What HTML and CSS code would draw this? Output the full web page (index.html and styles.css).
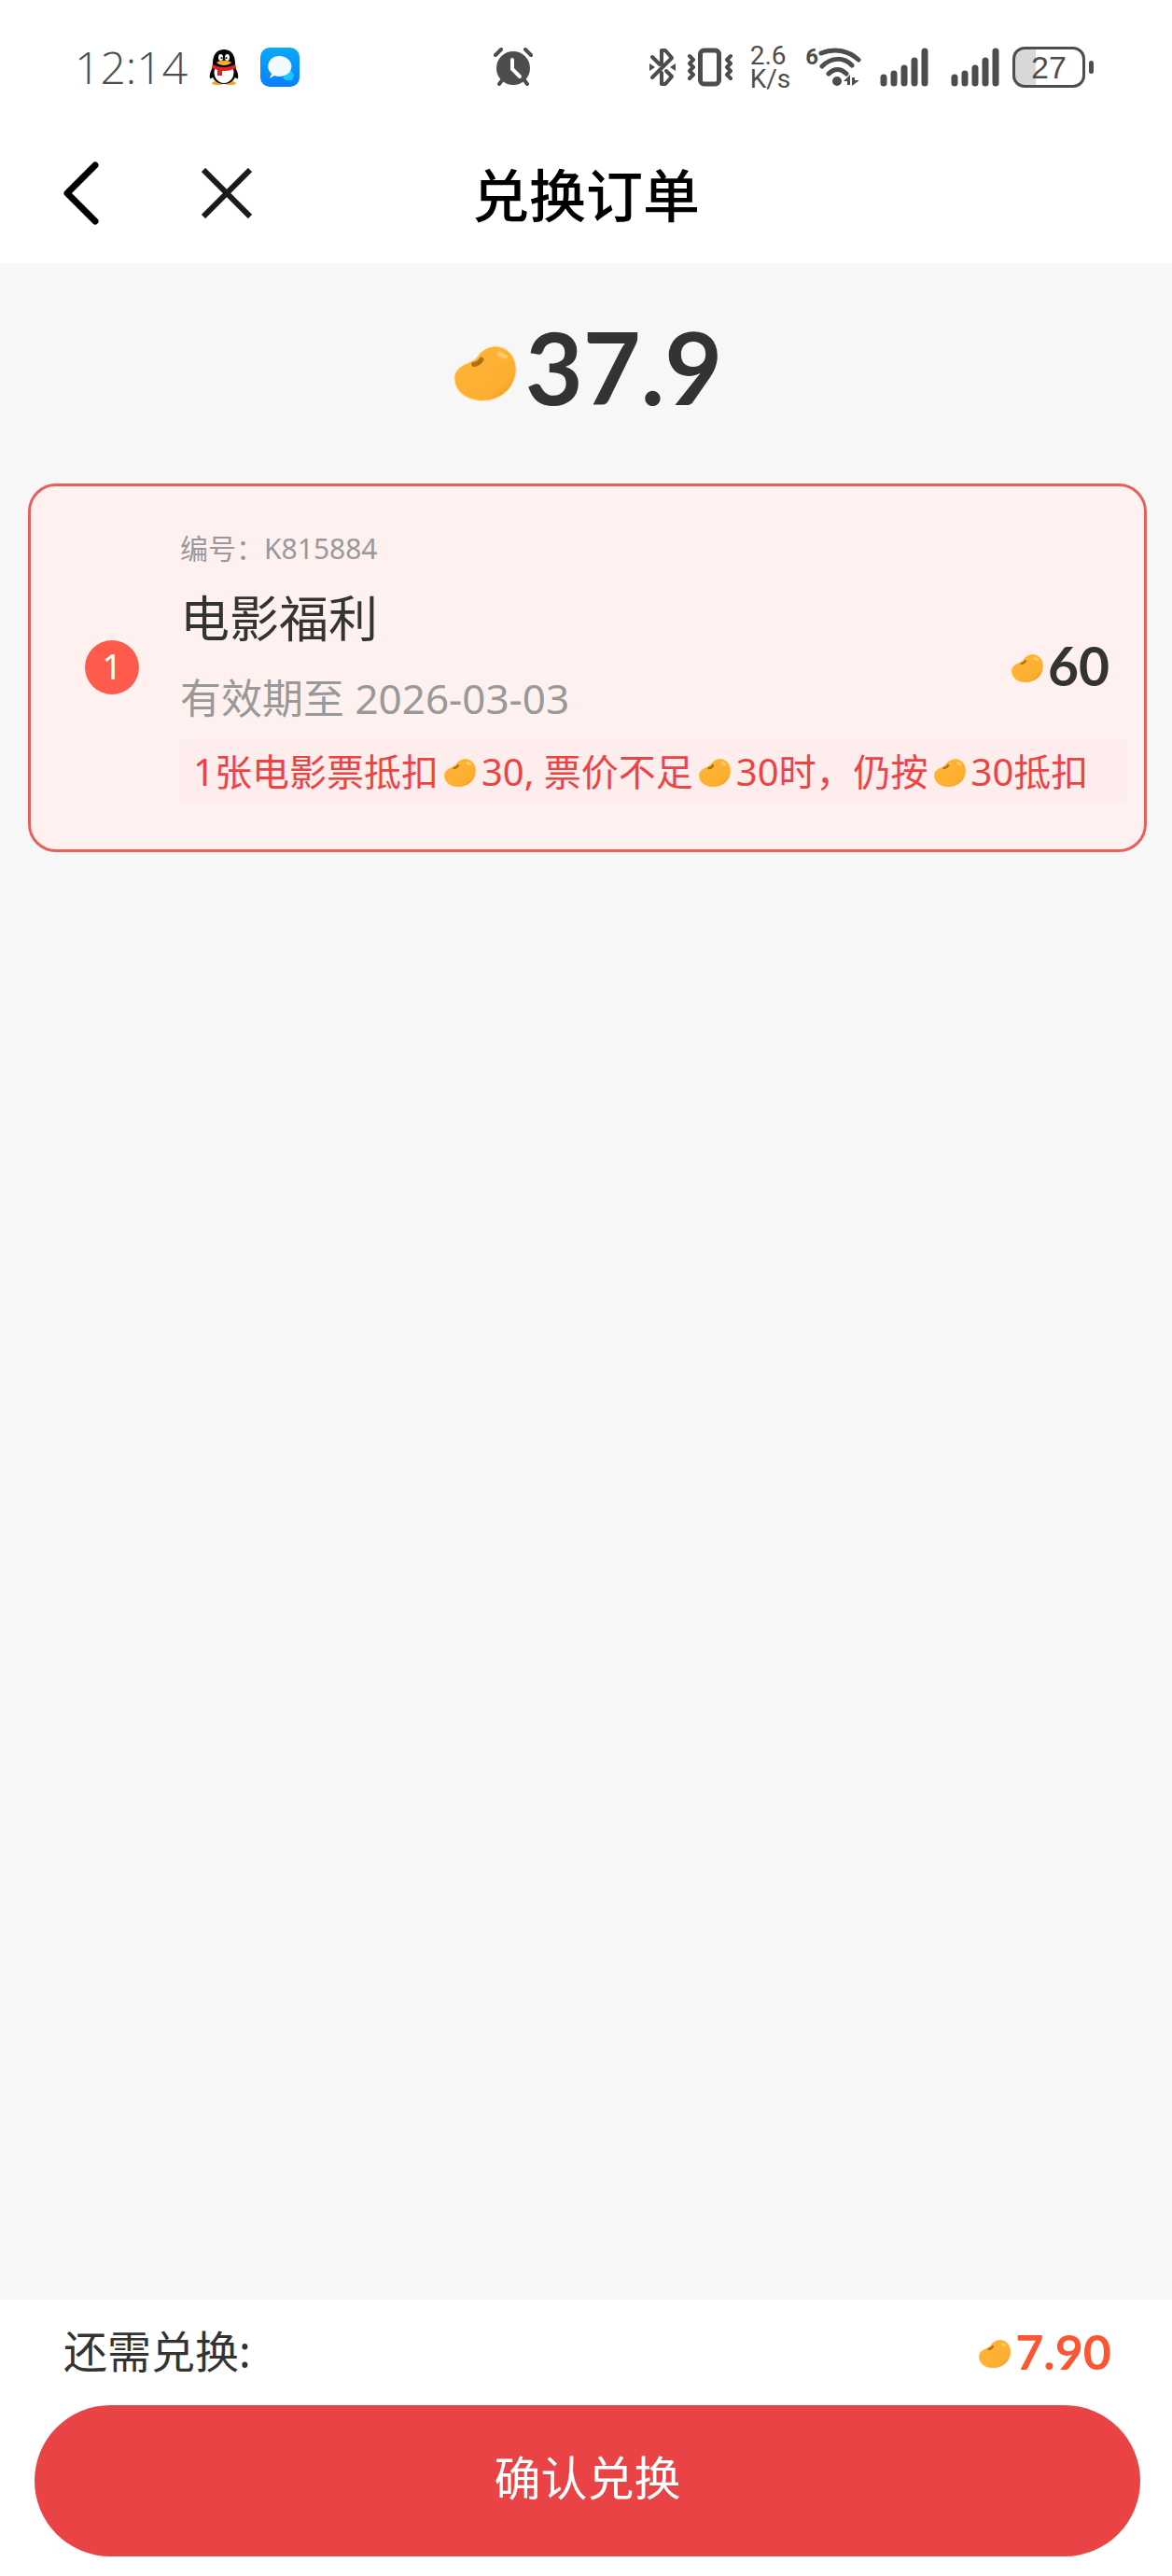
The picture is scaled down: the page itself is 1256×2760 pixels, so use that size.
FILE: index.html
```html
<!DOCTYPE html>
<html lang="zh-CN">
<head>
<meta charset="utf-8">
<meta name="viewport" content="width=device-width, initial-scale=1">
<title>兑换订单</title>
<link rel="stylesheet" href="styles.css">
</head>
<body>
<svg class="defs" width="0" height="0" aria-hidden="true">
  <defs>
    <linearGradient id="bean-fill" x1="0" y1="0" x2="1" y2="1">
      <stop offset="0" stop-color="#ffb638"/>
      <stop offset="0.75" stop-color="#fdae31"/>
      <stop offset="1" stop-color="#d98a1c"/>
    </linearGradient>
    <linearGradient id="chat-fill" x1="0" y1="0" x2="0" y2="1">
      <stop offset="0" stop-color="#0aa9fb"/>
      <stop offset="1" stop-color="#0a7dfc"/>
    </linearGradient>
    <symbol id="bean" viewBox="0 0 68 61">
      <path d="M26 12C32 3 42 0 50 2C62 5 68 17 67 29C65 48 50 60 31 60C13 60 1 50 1 36C1 24 12 21 18 18C22 16 24 15 26 12Z" fill="#ffe6b8"/>
      <path d="M26 13C32 4 42 1 49 3C61 6 67 17 66 29C64 47 49 59 31 59C14 59 2 49 2 36C2 25 12 22 18 19C22 17 24 16 26 13Z" fill="url(#bean-fill)"/>
      <path d="M22 21C26 21 28 19 30 16" fill="none" stroke="#b06f17" stroke-width="5" stroke-linecap="round"/>
      <path d="M49 10L55 13" stroke="#ffcb66" stroke-width="5" stroke-linecap="round"/>
    </symbol>
    <symbol id="signal" viewBox="0 0 52 42">
      <path d="M4 32V38M15 28V38M26 22V38M37 14V38M48 4V38" stroke="#4d4d4d" stroke-width="7" stroke-linecap="round"/>
    </symbol>
  </defs>
</svg>

<div class="status">
  <div class="status-group status-left">
    <time class="clock">12:14</time>
    <svg class="qq" width="32" height="38" viewBox="0 0 32 38" role="img" aria-label="QQ">
      <ellipse cx="9" cy="36" rx="6" ry="2" fill="#f7a81b"/><ellipse cx="23" cy="36" rx="6" ry="2" fill="#f7a81b"/>
      <path d="M5 18C2 22 0 27 1 31C3 32 5 28 6 27L26 27C27 29 29 32 31 31C32 27 30 22 27 18Z" fill="#050505"/>
      <path d="M4 15C4 5 9 0 16 0S28 5 28 15L29 24C29 32 24 37 16 37S3 32 3 24Z" fill="#050505"/>
      <path d="M6 21H26C28 29 23 36 16 36S4 29 6 21Z" fill="#fff"/>
      <ellipse cx="12.500" cy="8.500" rx="2.500" ry="3.500" fill="#fff"/><ellipse cx="19.500" cy="8.500" rx="2.500" ry="3.500" fill="#fff"/>
      <circle cx="13.500" cy="9" r="1"/><circle cx="18.500" cy="9" r="1"/>
      <path d="M8 14C12 11 20 11 24 14C20 18 12 18 8 14Z" fill="#f9b01c"/>
      <path d="M4 16C11 20 21 20 28 16L29 20C22 23 19 23 14 23V28H9V22L3 20Z" fill="#e02426"/>
    </svg>
    <svg width="42" height="42" viewBox="0 0 42 42" role="img" aria-label="消息">
      <rect width="42" height="42" rx="10" fill="url(#chat-fill)"/>
      <path d="M28 24A7 6 0 0 1 34 34L35 35H28A6 6 0 0 1 24 32Z" fill="#16c9fb"/>
      <path d="M20 9A13 11 0 1 1 15 30L10 33L12 28A12 11 0 0 1 20 9Z" fill="#f2faff"/>
    </svg>
  </div>

  <svg width="44" height="42" viewBox="0 0 44 42" fill="none" stroke="#4d4d4d" stroke-linecap="round" role="img" aria-label="闹钟">
    <circle cx="22" cy="22" r="18" fill="#4d4d4d" stroke="none"/>
    <path d="M3 8L9 2M35 2L41 8M10 35L7 39M34 35L37 39" stroke-width="4"/>
    <path d="M21 13V23L29 31" stroke="#fff" stroke-width="4"/>
  </svg>

  <div class="status-group status-right">
    <svg width="28" height="42" viewBox="0 0 28 42" fill="none" stroke="#4d4d4d" stroke-width="4" stroke-linecap="round" stroke-linejoin="round" role="img" aria-label="蓝牙">
      <path d="M3 32L24 11L17 3H13V17M3 10L11 18M13 27V39H17L24 31L18 25"/>
      <path d="M0 17L6 21L0 25ZM28 17L22 21L28 25Z" fill="#4d4d4d" stroke="none"/>
    </svg>
    <svg class="vibrate" width="50" height="42" viewBox="0 0 50 42" fill="none" stroke="#4d4d4d" stroke-linecap="round" stroke-linejoin="round" role="img" aria-label="振动">
      <rect x="14.500" y="3" width="20" height="36" rx="4" stroke-width="5"/>
      <path d="M3 9L7 13L3 17L7 21L3 25L7 29L3 33M47 9L43 13L47 17L43 21L47 25L43 29L47 33" stroke-width="4"/>
    </svg>
    <div class="speed">2.6<br>K/s</div>
    <div class="wifi">
      <span class="wifi-gen">6</span>
      <svg width="46" height="42" viewBox="0 0 46 42" fill="none" stroke="#4d4d4d" stroke-linecap="round" role="img" aria-label="无线网络">
        <path d="M3 6C17 0 32 3 43 13M4 20C14 10 27 10 36 19M11 28C17 22 24 22 30 28" stroke-width="5"/>
        <circle cx="20" cy="36" r="5" fill="#4d4d4d" stroke="none"/>
        <path d="M27 36L34 29V40H31V36ZM36 41V32H39V35L44 35Z" fill="#4d4d4d" stroke="none"/>
      </svg>
    </div>
    <svg class="signal" width="52" height="42" role="img" aria-label="信号一"><use href="#signal"/></svg>
    <svg class="signal" width="52" height="42" role="img" aria-label="信号二"><use href="#signal"/></svg>
    <div class="battery"><span class="battery-body">27</span><span class="battery-tip"></span></div>
  </div>
</div>

<header class="nav">
  <div class="nav-actions">
    <button class="icon-button" type="button" aria-label="返回">
      <svg width="38" height="68" viewBox="0 0 38 68" fill="none" stroke="#000" stroke-width="7" stroke-linecap="round" stroke-linejoin="round"><path d="M34 4L4 34L34 64"/></svg>
    </button>
    <button class="icon-button" type="button" aria-label="关闭">
      <svg width="54" height="54" viewBox="0 0 54 54" fill="none" stroke="#1a1a1a" stroke-width="6"><path d="M2 2L52 52M52 2L2 52"/></svg>
    </button>
  </div>
  <h1 class="nav-title">兑换订单</h1>
</header>

<main class="content">
  <p class="total"><svg class="bean-large"><use href="#bean"/></svg>37.9</p>
  <article class="voucher">
    <span class="badge">1</span>
    <div class="voucher-info">
      <p class="voucher-code">编号：K815884</p>
      <h2 class="voucher-name">电影福利</h2>
      <p class="voucher-date">有效期至 2026-03-03</p>
      <p class="voucher-rule">1张电影票抵扣<svg class="bean-inline"><use href="#bean"/></svg>30, 票价不足<svg class="bean-inline"><use href="#bean"/></svg>30时，仍按<svg class="bean-inline"><use href="#bean"/></svg>30抵扣</p>
    </div>
    <p class="voucher-price"><svg class="bean-small"><use href="#bean"/></svg>60</p>
  </article>
</main>

<footer class="checkout">
  <div class="due">
    <span>还需兑换:</span>
    <span class="due-amount"><svg class="bean-small"><use href="#bean"/></svg>7.90</span>
  </div>
  <button class="confirm" type="button">确认兑换</button>
</footer>
</body>
</html>
```

FILE: styles.css
```css
* {
  box-sizing: border-box;
}

body {
  margin: 0;
  min-height: 100vh;
  display: flex;
  flex-direction: column;
  background: #f7f7f7;
  color: #333;
  font-family: "Noto Sans", "Noto Sans CJK SC", sans-serif;
}

p,
h1,
h2 {
  margin: 0;
  font-weight: 400;
}

svg {
  display: block;
  flex: none;
}

.defs {
  position: absolute;
}

/* Status bar */
.status {
  display: grid;
  grid-template-columns: 1fr auto auto;
  align-items: center;
  height: 144px;
  padding: 0 84px 0 80px;
  background: #fff;
  color: #4d4d4d;
}

.status > svg {
  margin-right: 124px;
}

.status-group {
  display: flex;
  align-items: center;
}

.status-left {
  gap: 23px;
}

.status-right {
  justify-content: flex-end;
}

.clock {
  font: 300 48px/56px "Open Sans", sans-serif;
}

.vibrate {
  margin-left: 12px;
}

.speed {
  margin-left: 18px;
  font: 400 28px/25px Roboto, sans-serif;
}

.wifi {
  display: flex;
  margin: 0 20px 0 16px;
}

.wifi-gen {
  font: 700 24px/20px Roboto, sans-serif;
}

.signal + .signal {
  margin-left: 24px;
}

.battery {
  display: flex;
  align-items: center;
  gap: 4px;
  margin-left: 14px;
}

.battery-body {
  width: 78px;
  border: 3px solid #4d4d4d;
  border-radius: 13px;
  background: linear-gradient(90deg, #d8d8d8 30%, #fff 30%);
  font: 400 34px/38px "Liberation Sans", sans-serif;
  text-align: center;
}

.battery-tip {
  width: 5px;
  height: 14px;
  border-radius: 3px;
  background: #4d4d4d;
}

/* Navigation bar */
.nav {
  display: grid;
  grid-template-columns: 1fr auto 1fr;
  align-items: center;
  height: 138px;
  padding: 0 68px 12px;
  background: #fff;
  color: #000;
}

.nav-actions {
  display: flex;
  align-items: center;
  gap: 110px;
}

.icon-button {
  padding: 0;
  border: 0;
  background: none;
}

.nav-title {
  padding-top: 6px;
  font-size: 61px;
  line-height: 84px;
  font-weight: 500;
}

/* Order content */
.content {
  flex: 1;
  padding: 47px 27px 50px 30px;
}

.total {
  display: flex;
  justify-content: center;
  align-items: center;
  gap: 8px;
  margin-bottom: 61px;
  font: 700 107px/128px Lato, sans-serif;
}

.bean-large {
  width: 70px;
  height: 62px;
  margin-top: 14px;
}

.bean-small {
  width: 36px;
  height: 32px;
  margin-top: 6px;
}

.bean-inline {
  display: inline-block;
  width: 36px;
  height: 32px;
  margin: 0 5px;
  vertical-align: -2px;
}

.voucher {
  display: grid;
  grid-template-columns: 58px 1fr auto;
  align-items: center;
  column-gap: 44px;
  padding: 44px 19px 49px 58px;
  border: 3px solid #e4625b;
  border-radius: 30px;
  background: #fef1f0;
}

.badge {
  grid-area: 1 / 1;
  height: 58px;
  margin-top: 4px;
  border-radius: 50%;
  background: #ff5b4d;
  color: #fff;
  font-size: 38px;
  line-height: 54px;
  text-align: center;
}

.voucher-info {
  grid-area: 1 / 2 / 2 / 4;
}

.voucher-code {
  color: #999;
  font-size: 30px;
  line-height: 46px;
}

.voucher-name {
  font-size: 53px;
  line-height: 104px;
}

.voucher-date {
  margin-bottom: 12px;
  color: #999;
  font-size: 44px;
  line-height: 66px;
}

.voucher-rule {
  padding: 0 14px;
  background: #feeded;
  color: #ec4444;
  font-size: 40px;
  line-height: 68px;
  white-space: nowrap;
}

.voucher-price {
  grid-area: 1 / 3;
  display: flex;
  align-items: center;
  gap: 4px;
  padding-right: 18px;
  font: 700 57px/68px Lato, sans-serif;
}

/* Checkout bar */
.checkout {
  padding: 20px 34px 21px 37px;
  background: #fff;
}

.due {
  display: flex;
  justify-content: space-between;
  align-items: center;
  padding: 0 31px;
  margin-bottom: 23px;
  font-size: 47px;
  line-height: 70px;
}

.due-amount {
  display: flex;
  align-items: center;
  gap: 4px;
  color: #fc5531;
  font-family: Lato, sans-serif;
  font-size: 52px;
  font-weight: 700;
}

.confirm {
  display: block;
  width: 100%;
  height: 162px;
  padding: 0 0 6px;
  border: 0;
  border-radius: 81px;
  background: #e94345;
  color: #fff;
  font: 400 50px/72px "Noto Sans", "Noto Sans CJK SC", sans-serif;
}
```
